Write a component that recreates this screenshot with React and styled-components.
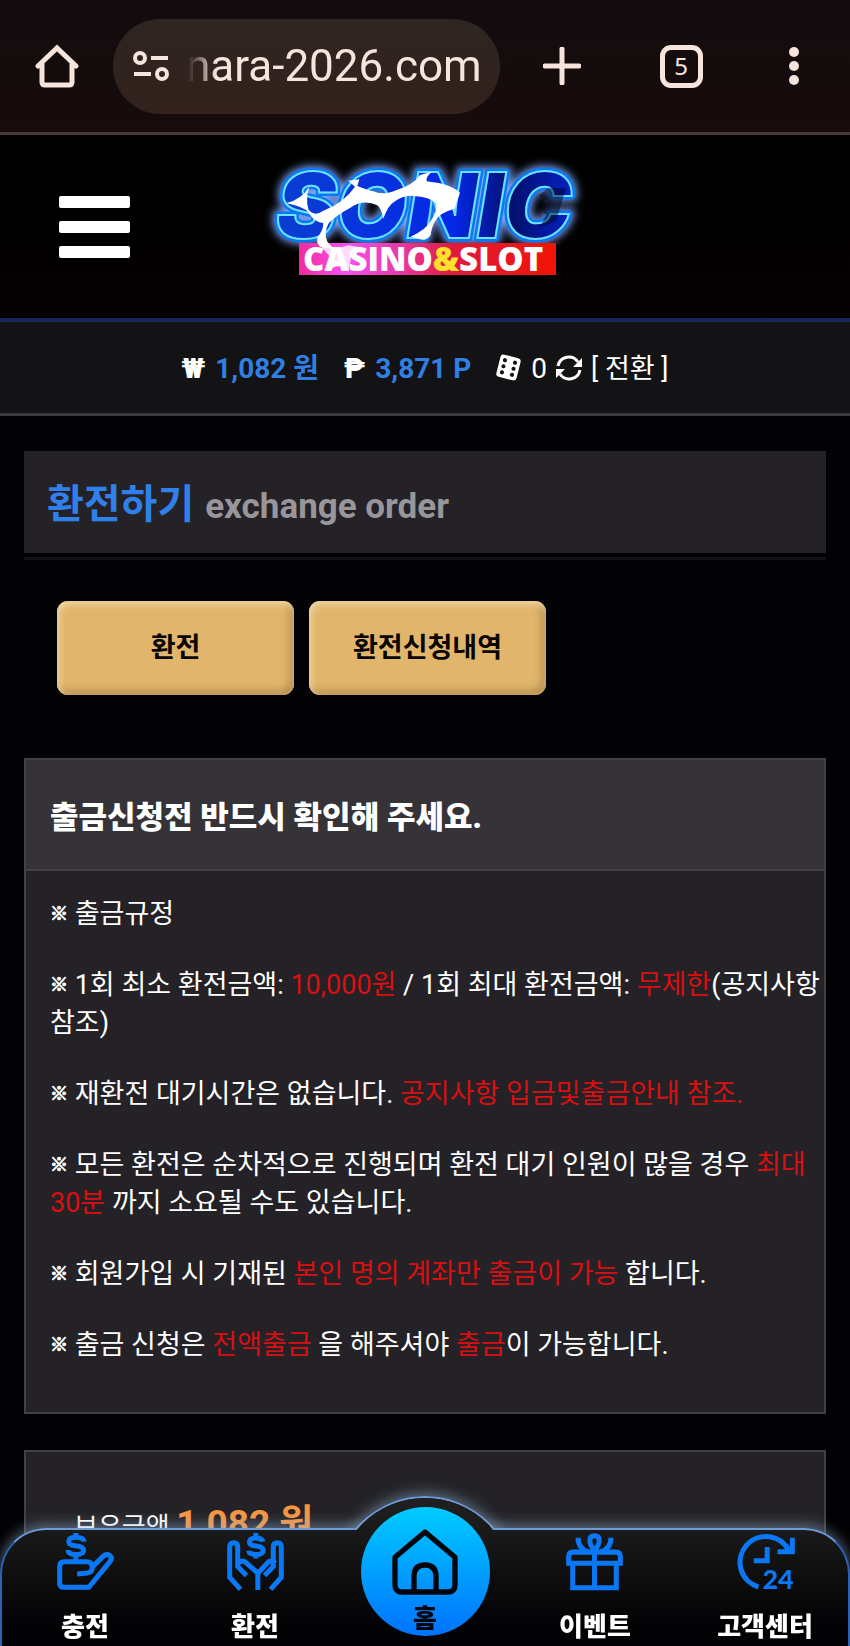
import { useState } from "react";
import styled, { createGlobalStyle, css } from "styled-components";

const wallet = { money: "1,082", point: "3,871", coupon: 0 };

function BrowserBar() {
  const [address, setAddress] = useState("nara-2026.com");

  return (
    <Browser>
      <BrowserButton aria-label="Home">
        <svg width="44" height="44" viewBox="0 0 44 44" fill="none">
          <path
            d="M3 22 22 4l19 18M7 20v18q0 3 3 3h24q3 0 3-3V20"
            stroke="#f7e4dc"
            strokeWidth="5"
            strokeLinecap="round"
            strokeLinejoin="miter"
          />
        </svg>
      </BrowserButton>
      <AddressBox>
        <svg width="38" height="32" viewBox="0 0 38 32" fill="none" stroke="#f7e4dc" strokeWidth="4">
          <circle cx="8" cy="8" r="5" />
          <circle cx="30" cy="24" r="5" />
          <path d="M19 8h17M2 24h17" />
        </svg>
        <Address
          aria-label="Address"
          value={address}
          onChange={(e) => setAddress(e.target.value)}
        />
      </AddressBox>
      <BrowserActions>
        <BrowserButton aria-label="New tab">
          <svg width="38" height="38" viewBox="0 0 38 38">
            <path d="M19 2v34M2 19h34" stroke="#f7e4dc" strokeWidth="5" strokeLinecap="round" />
          </svg>
        </BrowserButton>
        <TabCount>5</TabCount>
        <BrowserButton aria-label="Menu">
          <svg width="26" height="38" viewBox="0 0 26 38" fill="#f7e4dc">
            <circle cx="13" cy="5" r="5" />
            <circle cx="13" cy="19" r="5" />
            <circle cx="13" cy="33" r="5" />
          </svg>
        </BrowserButton>
      </BrowserActions>
    </Browser>
  );
}

function Logo() {
  return (
    <LogoSvg viewBox="0 0 330 130" role="img" aria-label="SONIC CASINO&SLOT">
      <defs>
        <linearGradient id="sonicFill" x1="0" x2="1">
          <stop offset="0" stopColor="#0a3fd0" />
          <stop offset="0.6" stopColor="#0428e8" />
          <stop offset="0.8" stopColor="#04106e" />
          <stop offset="1" stopColor="#0520c8" />
        </linearGradient>
        <linearGradient id="ribbonFill" x1="0" x2="1">
          <stop offset="0" stopColor="#f02a9a" />
          <stop offset="0.18" stopColor="#fa50f0" />
          <stop offset="0.38" stopColor="#e83aa8" />
          <stop offset="0.6" stopColor="#e01a3c" />
          <stop offset="1" stopColor="#f01404" />
        </linearGradient>
        <filter id="glow" x="-20%" y="-30%" width="140%" height="160%">
          <feGaussianBlur stdDeviation="4" />
        </filter>
      </defs>
      <g fontFamily="Inter, Roboto, sans-serif" fontWeight="900" fontStyle="italic" fontSize="91">
        <text x="16" y="76" fill="#8fb4ff" stroke="#7fa6ff" strokeWidth="10" filter="url(#glow)">SONIC</text>
        <text x="16" y="76" fill="url(#sonicFill)" stroke="#0a78f0" strokeWidth="7" strokeLinejoin="round">SONIC</text>
        <text x="16" y="76" fill="url(#sonicFill)" stroke="#6fe0ff" strokeWidth="2">SONIC</text>
      </g>
      {/* spikes on the last letter */}
      <path d="M288 26l-9 8 10 5-10 6 7 8-6 12 16-6 10-33z" fill="#04061c" opacity=".5" />
      <rect x="39" y="81" width="257" height="32" fill="url(#ribbonFill)" />
      <g transform="translate(-20 -22) scale(.3333)" fill="#fff">
        <path d="M138 190Q185 178 208 140Q196 175 205 208Q222 232 250 212Q310 190 345 140L325 122L358 118L352 138Q380 150 400 154Q430 168 470 150Q520 135 540 105L575 95Q556 112 560 124L600 130Q640 140 660 158L644 206Q600 218 588 240Q574 262 572 285Q560 304 540 298L512 290Q560 268 574 240Q592 215 588 190Q570 170 520 168Q490 165 462 186Q444 196 430 236Q424 205 412 196Q370 176 330 204Q290 225 266 250Q250 280 262 305L285 330L240 320Q226 304 234 290Q250 270 250 250Q222 245 206 218Q192 200 138 190Z" />
        <path d="M236 312L278 330L325 316L360 322L334 348L326 394L296 374L262 394L270 350Z" opacity=".8" />
      </g>
      <text
        x="43"
        y="109"
        fill="#fff"
        fontFamily="Open Sans, Noto Sans, sans-serif"
        fontWeight="800"
        fontSize="33"
      >
        CASINO<tspan fill="#ffe02c">&amp;</tspan>SLOT
      </text>
    </LogoSvg>
  );
}

function DiceIcon() {
  return (
    <svg width="27" height="27" viewBox="0 0 26 26">
      <g transform="rotate(14 13 13)">
        <rect x="3" y="2" width="20" height="22" rx="3" fill="#fff" />
        <g fill="#131215">
          <circle cx="8" cy="7" r="2" />
          <circle cx="8" cy="13" r="2" />
          <circle cx="8" cy="19" r="2" />
          <circle cx="18" cy="7" r="2" />
          <circle cx="18" cy="13" r="2" />
          <circle cx="18" cy="19" r="2" />
        </g>
      </g>
    </svg>
  );
}

function RefreshIcon() {
  return (
    <svg width="26" height="26" viewBox="0 0 26 26" fill="none" stroke="#fff" strokeWidth="3">
      <path d="M2 11A11 11 0 0 1 22 7M24 15A11 11 0 0 1 4 19" />
      <path d="M26 3v9h-9zM0 23v-9h9z" fill="#fff" stroke="none" />
    </svg>
  );
}

function DepositIcon() {
  return (
    <NavIcon viewBox="0 0 170 170">
      <path d="M60 122l32-3q14-3 13-18-1-15-17-15H22Q8 86 8 100v50q0 12 12 12h75L159 84q7-10-2-17-10-6-19 2l-34 34" />
      <path d="M80 26q0-13-25-13-20 0-20 12 0 11 20 13 24 2 24 14 0 12-24 12-22 0-22-13M56 0v14M56 62v20" />
    </NavIcon>
  );
}

function WithdrawIcon() {
  return (
    <NavIcon viewBox="0 0 170 170">
      <path d="M40 168L8 132V42q0-13 12-13t12 13v58l26 27M92 170v-50L54 86q-12-6-20 4" />
      <path d="M130 168l32-36V42q0-13-12-13t-12 13v58l-26 27M92 120l32-34q12-6 20 4" />
      <path d="M107 26q-2-11-21-11-19 0-19 12 0 10 19 12 22 2 22 13 0 12-22 12-20 0-21-11M86 0v15M86 62v14" />
    </NavIcon>
  );
}

function EventIcon() {
  return (
    <NavIcon viewBox="0 0 170 170">
      <path d="M8 90V70q0-13 13-13h128q13 0 13 13v20zM20 92v71h130V92M85 57v106" />
      <path d="M85 52q-14-16-14-30 0-14 14-14t14 14q0 14-14 30M36 14q0 32 30 42M134 14q0 32-30 42" />
    </NavIcon>
  );
}

function SupportIcon() {
  return (
    <NavIcon viewBox="0 0 170 170">
      <path d="M64 161A77 77 0 1 1 156 55M165 14v42h-44M90 42v41H50" />
      <text x="76" y="168" fontFamily="Lato, Roboto, sans-serif" fontWeight="900" fontSize="80" fill="#0a78f5" stroke="none">
        24
      </text>
    </NavIcon>
  );
}

function HomeIcon() {
  return (
    <svg width="66" height="66" viewBox="0 0 198 198" fill="none" stroke="#02060c" strokeWidth="16" strokeLinejoin="round">
      <path d="M99 9l90 76v82q0 22-22 22H31q-22 0-22-22V85z" />
      <path d="M66 188v-46q0-34 33-34t33 34v46" />
    </svg>
  );
}

function WalletBar() {
  return (
    <Wallet>
      <Currency>₩</Currency>
      <Amount $right={25}>{wallet.money} 원</Amount>
      <Currency>₱</Currency>
      <Amount $right={24}>{wallet.point} P</Amount>
      <DiceIcon />
      <Count>{wallet.coupon}</Count>
      <RefreshIcon />
      <ConvertButton>[ 전환 ]</ConvertButton>
    </Wallet>
  );
}

function Notice() {
  return (
    <Card>
      <CardHeader>출금신청전 반드시 확인해 주세요.</CardHeader>
      <CardBody>
        <p>
          <Mark>※</Mark> 출금규정
        </p>
        <p>
          <Mark>※</Mark> 1회 최소 환전금액: <Red>10,000원</Red> / 1회 최대 환전금액: <Red>무제한</Red>(공지사항 참조)
        </p>
        <p>
          <Mark>※</Mark> 재환전 대기시간은 없습니다. <Red>공지사항 입금및출금안내 참조.</Red>
        </p>
        <p>
          <Mark>※</Mark> 모든 환전은 순차적으로 진행되며 환전 대기 인원이 많을 경우 <Red>최대 30분</Red> 까지 소요될 수도 있습니다.
        </p>
        <p>
          <Mark>※</Mark> 회원가입 시 기재된 <Red>본인 명의 계좌만 출금이 가능</Red> 합니다.
        </p>
        <p>
          <Mark>※</Mark> 출금 신청은 <Red>전액출금</Red> 을 해주셔야 <Red>출금</Red>이 가능합니다.
        </p>
      </CardBody>
    </Card>
  );
}

function BottomNav() {
  return (
    <Nav>
      <Hump />
      <NavBar />
      <HumpFill />
      <NavList>
        <NavLink href="#deposit">
          <DepositIcon />
          충전
        </NavLink>
        <NavLink href="#withdraw">
          <WithdrawIcon />
          환전
        </NavLink>
        <HomeLink href="#home">
          <HomeIcon />
          홈
        </HomeLink>
        <NavLink href="#event">
          <EventIcon />
          이벤트
        </NavLink>
        <NavLink href="#support">
          <SupportIcon />
          고객센터
        </NavLink>
      </NavList>
    </Nav>
  );
}

function App() {
  return (
    <Page>
      <GlobalStyle />
      <BrowserBar />
      <Header>
        <MenuButton aria-label="메뉴">
          <span />
          <span />
          <span />
        </MenuButton>
        <Logo />
      </Header>
      <WalletBar />
      <Main>
        <TitleBox>
          <Title>
            환전하기 <small>exchange order</small>
          </Title>
        </TitleBox>
        <Tabs>
          <TabButton>환전</TabButton>
          <TabButton>환전신청내역</TabButton>
        </Tabs>
        <Notice />
        <BalanceCard>
          보유금액 <strong>{wallet.money} 원</strong>
        </BalanceCard>
      </Main>
      <BottomNav />
    </Page>
  );
}

export default App;

const GlobalStyle = createGlobalStyle`
  * {
    box-sizing: border-box;
  }
  body {
    margin: 0;
    background: #020103;
    color: #fff;
    font-family: Roboto, "Noto Sans CJK KR", sans-serif;
    font-size: 27px;
  }
  button, input {
    margin: 0;
    padding: 0;
    border: 0;
    background: none;
    color: inherit;
    font: inherit;
  }
  svg {
    display: block;
    flex-shrink: 0;
  }
`;

const Page = styled.div`
  display: flex;
  flex-direction: column;
  min-height: 100vh;
`;

const Browser = styled.div`
  display: flex;
  align-items: center;
  height: 135px;
  padding: 0 43px 0 35px;
  border-bottom: 3px solid #453a38;
  background: linear-gradient(#120c0e, #170b0b);
`;

const BrowserButton = styled.button`
  display: flex;
  cursor: pointer;
`;

const AddressBox = styled.div`
  display: flex;
  align-items: center;
  width: 387px;
  height: 95px;
  margin-left: 34px;
  padding: 0 10px 0 19px;
  gap: 16px;
  border-radius: 48px;
  background: linear-gradient(#2e2522, #33211c);
`;

const Address = styled.input`
  flex: 1;
  min-width: 0;
  color: #f7e4dc;
  font-size: 44px;
  line-height: 60px;
  outline: none;
  mask-image: linear-gradient(to right, transparent 2px, #000 30px);
`;

const BrowserActions = styled.div`
  display: flex;
  flex: 1;
  align-items: center;
  justify-content: space-between;
  margin-left: 43px;
`;

const TabCount = styled.button`
  width: 43px;
  height: 43px;
  border: 5px solid #f7e4dc;
  border-radius: 11px;
  color: #f7e4dc;
  font-family: "Noto Sans", sans-serif;
  font-size: 24px;
  line-height: 32px;
`;

const Header = styled.header`
  display: grid;
  grid-template-columns: 1fr auto 1fr;
  align-items: center;
  height: 187px;
  padding: 0 59px;
  border-bottom: 4px solid #14265c;
  background: linear-gradient(#000, #020000 60%, #070102);
`;

const LogoSvg = styled.svg`
  width: 330px;
  height: 130px;
  overflow: visible;
`;

const MenuButton = styled.button`
  display: flex;
  flex-direction: column;
  gap: 13px;
  width: 71px;
  cursor: pointer;

  span {
    height: 12px;
    border-radius: 2px;
    background: #fff;
  }
`;

const Wallet = styled.div`
  display: flex;
  align-items: baseline;
  justify-content: center;
  height: 94px;
  border-bottom: 3px solid #3a393b;
  background: #131215;
  font-size: 28px;
  line-height: 94px;

  svg {
    align-self: center;
  }
`;

const Currency = styled.b`
  margin-right: 10px;
  font-weight: 900;
`;

const Amount = styled.b`
  margin-right: ${(props) => props.$right}px;
  color: #2f80e2;
`;

const Count = styled.span`
  margin: 0 9px;
`;

const ConvertButton = styled.button`
  margin-left: 9px;
  font-size: 27px;
  cursor: pointer;
`;

const Main = styled.main`
  display: flex;
  flex: 1;
  flex-direction: column;
  padding: 35px 24px 0;
`;

const TitleBox = styled.div`
  padding-bottom: 4px;
  border-bottom: 3px solid #131115;
`;

const Title = styled.h1`
  display: flex;
  align-items: baseline;
  gap: 11px;
  height: 102px;
  margin: 0;
  padding: 3px 23px 0;
  background: #242226;
  color: #2f80ea;
  font-size: 40px;
  font-weight: 700;
  line-height: 102px;

  small {
    color: #98969a;
    font-size: 35px;
  }
`;

const Tabs = styled.div`
  display: flex;
  gap: 15px;
  margin: 41px 33px 63px;
`;

const TabButton = styled.button`
  width: 237px;
  height: 94px;
  padding-bottom: 6px;
  border-radius: 11px;
  background: #e1b66c;
  box-shadow: inset 2px 3px 7px #f0d9ab, inset -4px -4px 8px #b18c4c;
  color: #080502;
  font-weight: 700;
  cursor: pointer;
`;

const cardBox = css`
  border: 2px solid #434145;
  background: #242226;
`;

const Card = styled.section`
  ${cardBox}
`;

const CardHeader = styled.h2`
  margin: 0;
  padding: 6px 24px 0;
  border-bottom: 2px solid #434145;
  background: #363338;
  font-size: 31px;
  font-weight: 900;
  line-height: 103px;
`;

const CardBody = styled.div`
  padding: 24px 4px 48px 24px;
  line-height: 38px;

  p {
    margin: 0 0 33px;
  }
  p:last-child {
    margin: 0;
  }
`;

const Mark = styled.span`
  font-size: 18px;
  line-height: 20px;
  vertical-align: 3px;
  -webkit-text-stroke: 1px #fff;
`;

const Red = styled.span`
  color: #d90f12;
`;

const BalanceCard = styled.section`
  ${cardBox}
  flex: 1;
  margin-top: 36px;
  padding: 42px 48px 80px;
  border-bottom: 0;
  font-size: 26px;
  line-height: 60px;

  strong {
    color: #f79442;
    font-size: 37px;
  }
`;

const Nav = styled.nav`
  position: fixed;
  right: 0;
  bottom: 0;
  left: 0;
  height: 118px;
`;

const glow = css`
  border: 2px solid #6d9bd8;
  box-shadow: 0 -3px 14px rgba(150, 190, 225, 0.5);
`;

const Hump = styled.div`
  position: absolute;
  top: -32px;
  left: calc(50% - 91px);
  width: 182px;
  height: 150px;
  border-radius: 91px 91px 0 0;
  ${glow}
`;

const NavBar = styled.div`
  position: absolute;
  inset: 0;
  ${glow}
  border-color: #6d9bd8 #2b62b4;
  border-bottom: 0;
  border-radius: 46px 46px 0 0;
  background: linear-gradient(#1a1a1a, #0b0b0c 50%, #030205 80%);
`;

/* hides the straight edge of the bar under the round one */
const HumpFill = styled.div`
  position: absolute;
  top: -32px;
  left: calc(50% - 70px);
  width: 140px;
  height: 34px;
  background: linear-gradient(#212022, #1a1a1a);
  clip-path: circle(89px at 50% 91px);
`;

const NavList = styled.div`
  position: relative;
  display: grid;
  grid-template-columns: repeat(5, 1fr);
  justify-items: center;
  height: 100%;
`;

const NavLink = styled.a`
  display: flex;
  flex-direction: column;
  align-items: center;
  gap: 17px;
  padding-top: 5px;
  color: #fff;
  font-size: 26px;
  font-weight: 900;
  line-height: 40px;
  text-decoration: none;
`;

const NavIcon = styled.svg`
  width: 57px;
  height: 57px;
  overflow: visible;
  fill: none;
  stroke: #0a78f5;
  stroke-width: 15px;
`;

const HomeLink = styled(NavLink)`
  gap: 4px;
  width: 129px;
  height: 129px;
  margin-top: -21px;
  padding-top: 22px;
  border-radius: 50%;
  background: linear-gradient(#00ccff, #0072ff);
  color: #02060c;
`;
